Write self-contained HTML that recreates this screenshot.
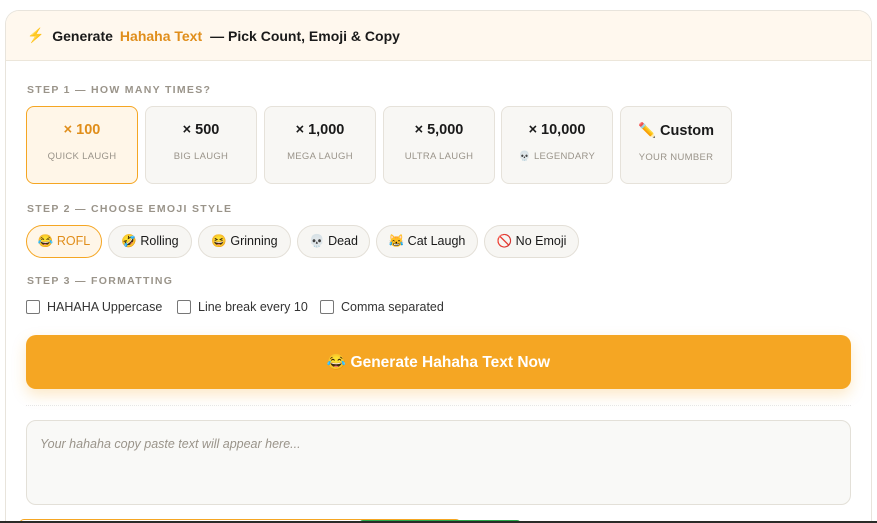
<!DOCTYPE html>
<html><head><meta charset="utf-8"><style>
*{box-sizing:border-box;margin:0;padding:0}
html,body{width:877px;height:523px;overflow:hidden}
body{background:#fff;font-family:"Liberation Sans","Noto Sans CJK SC",sans-serif;color:#1a1a1a;position:relative}
.card{position:absolute;left:5px;top:10px;width:867px;height:513px;border:1px solid #e8e4dc;border-bottom:none;border-radius:14px 14px 0 0;overflow:hidden;background:#fff}
.hd{height:50px;background:#fff8ee;border-bottom:1px solid #ece6da;padding:0 0 0 21px;display:flex;align-items:center;font-weight:bold;font-size:14px}
.hd .o{color:#e08e1b;margin:0 8px 0 7px}
.lab{position:absolute;left:21px;font-size:10.5px;font-weight:bold;letter-spacing:1.3px;color:#9a948a}
.cnt{position:absolute;top:95px;width:112px;height:78px;border:1px solid #e6e2da;border-radius:8px;background:#f8f7f4;text-align:center}
.cnt b{display:block;margin-top:15px;font-size:14.5px}
.cnt span{display:block;margin-top:13px;font-size:9.5px;color:#9a948a;letter-spacing:.3px}
.cnt.a{border-color:#f5a623;background:#fff6e8}.cnt.a b{color:#e08e1b}
.pill{position:absolute;top:214px;height:33px;border:1px solid #e3dfd7;border-radius:17px;background:#f7f6f3;font-size:12.5px;display:flex;align-items:center;justify-content:center}
.pill.a{border-color:#f5a623;background:#fff6e8;color:#e08e1b}
.chk{position:absolute;top:289px;font-size:12.5px;display:flex;align-items:center;color:#333}
.chk i{width:14px;height:14px;border:1px solid #777;border-radius:2px;margin-right:7px;display:inline-block}
.btn{position:absolute;left:20px;top:324px;width:825px;height:54px;background:#f5a623;border-radius:10px;color:#fff;font-weight:bold;font-size:15.5px;display:flex;align-items:center;justify-content:center;box-shadow:0 6px 14px rgba(245,166,35,.25)}
.dot{position:absolute;left:20px;top:394px;width:825px;border-top:1px dotted #e6e6e6}
.ta{position:absolute;left:20px;top:409px;width:825px;height:85px;border:1px solid #e3e0d8;border-radius:10px;background:#f9f9f7;padding:16px 13px;font-style:italic;font-size:12.5px;color:#9a948a}
</style></head><body>
<div class="card">
<div class="hd"><span style="color:#f5a623">⚡</span>&nbsp;&nbsp;Generate <span class="o">Hahaha Text</span>— Pick Count, Emoji &amp; Copy</div>
<div class="lab" style="top:73px">STEP 1 — HOW MANY TIMES?</div>
<div class="cnt a" style="left:20px"><b>× 100</b><span>QUICK LAUGH</span></div>
<div class="cnt" style="left:139px"><b>× 500</b><span>BIG LAUGH</span></div>
<div class="cnt" style="left:258px"><b>× 1,000</b><span>MEGA LAUGH</span></div>
<div class="cnt" style="left:377px"><b>× 5,000</b><span>ULTRA LAUGH</span></div>
<div class="cnt" style="left:495px"><b>× 10,000</b><span>💀 LEGENDARY</span></div>
<div class="cnt" style="left:614px"><b>✏️ Custom</b><span>YOUR NUMBER</span></div>
<div class="lab" style="top:192px">STEP 2 — CHOOSE EMOJI STYLE</div>
<div class="pill a" style="left:20px;width:76px">😂 ROFL</div>
<div class="pill" style="left:102px;width:84px">🤣 Rolling</div>
<div class="pill" style="left:192px;width:93px">😆 Grinning</div>
<div class="pill" style="left:291px;width:73px">💀 Dead</div>
<div class="pill" style="left:370px;width:102px">😹 Cat Laugh</div>
<div class="pill" style="left:478px;width:95px">🚫 No Emoji</div>
<div class="lab" style="top:264px">STEP 3 — FORMATTING</div>
<div class="chk" style="left:20px"><i></i>HAHAHA Uppercase</div>
<div class="chk" style="left:171px"><i></i>Line break every 10</div>
<div class="chk" style="left:314px"><i></i>Comma separated</div>
<div class="btn">😂 Generate Hahaha Text Now</div>
<div class="dot"></div>
<div class="ta">Your hahaha copy paste text will appear here...</div>
<div style="position:absolute;left:13px;top:508px;width:442px;height:5px;border:1px solid #f5a623;border-bottom:none;border-radius:6px 6px 0 0"></div>
<div style="position:absolute;left:353px;top:509px;width:162px;height:4px;background:#2aa84a;border-radius:4px 4px 0 0"></div>
</div>
<div style="position:absolute;left:0;top:521px;width:877px;height:2px;background:#2b2b28"></div>
</body></html>
